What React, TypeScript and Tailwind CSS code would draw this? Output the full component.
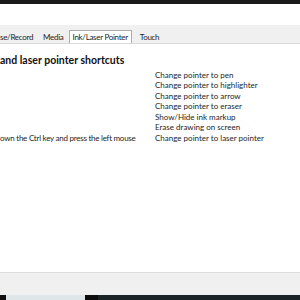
const shortcuts = [
  'Change pointer to pen',
  'Change pointer to highlighter',
  'Change pointer to arrow',
  'Change pointer to eraser',
  'Show/Hide ink markup',
  'Erase drawing on screen',
  'Change pointer to laser pointer',
];

const tabs = ['se/Record', 'Media', 'Ink/Laser Pointer', 'Touch'];

export default function App() {
  return (
    <div className="w-[300px] h-[300px] overflow-hidden flex flex-col bg-white text-[#1e1e1e] font-['Lato',sans-serif]">
      {/* top window edge */}
      <div className="h-[4px] bg-[#1b1b1b]" />
      <div className="h-[21px] bg-white" />

      {/* tab strip */}
      <div className="h-[19px] bg-[#f0f0f0] border-b border-[#dadada] flex items-end text-[8px] tracking-[-0.3px] leading-none">
        {tabs.map((t) => {
          const active = t === 'Ink/Laser Pointer';
          return (
            <div
              key={t}
              className={
                active
                  ? 'h-[13px] px-[3px] ml-[1px] mr-[2px] bg-white border border-b-0 border-[#adadad] flex items-center'
                  : 'h-[13px] pl-[6px] pr-[4px] flex items-center first:pl-0'
              }
            >
              {t}
            </div>
          );
        })}
      </div>

      {/* content */}
      <div className="flex-1 bg-white">
        <h2 className="mt-[11px] text-[10.5px] font-bold leading-none text-[#111]">and laser pointer shortcuts</h2>
        <div className="mt-[4px] grid grid-cols-[155px_1fr] text-[8px] leading-[10.5px]">
          <div className="flex flex-col">
            {shortcuts.map((s, i) => (
              <div key={s} className="whitespace-nowrap tracking-[-0.25px]">
                {i === shortcuts.length - 1 ? 'own the Ctrl key and press the left mouse' : '\u00a0'}
              </div>
            ))}
          </div>
          <div className="flex flex-col">
            {shortcuts.map((s) => (
              <div key={s} className="whitespace-nowrap">{s}</div>
            ))}
          </div>
        </div>
      </div>

      {/* bottom button bar */}
      <div className="h-[23px] bg-[#f0f0f0] border-t border-[#dcdcdc]" />

      {/* taskbar */}
      <div className="h-[5px] flex bg-[#1c2327]">
        <div className="w-[6px] bg-[#111]" />
        <div className="w-[79px] bg-[#dfe6ea]" />
        <div className="w-[13px] bg-[#0d0d0d]" />
      </div>
    </div>
  );
}
